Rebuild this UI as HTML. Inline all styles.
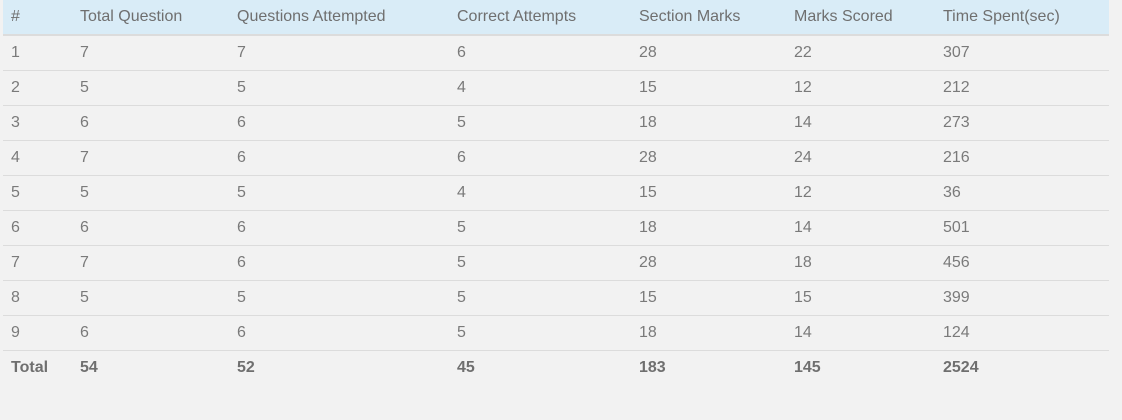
<html><head><style>
body{margin:0;background:#f2f2f2;font-family:"Liberation Sans",sans-serif;font-size:12px;color:#7a7a7a;}
table{position:absolute;left:3px;top:0;width:1106px;border-collapse:collapse;}
td,th{padding:0 0 0 8px;height:35px;text-align:left;border-bottom:1px solid #dcdcdc;}
th{background:#d9ecf7;font-weight:normal;color:#6f6f6f;height:35px;border-bottom:2px solid #dcdcdc;}
tr.t td{border-bottom:none;color:#6f6f6f;font-weight:bold;height:35px}
</style></head><body>
<table>
<colgroup><col style="width:69px"><col style="width:157px"><col style="width:220px"><col style="width:182px"><col style="width:155px"><col style="width:149px"><col></colgroup>
<tr><th>#</th><th>Total Question</th><th>Questions Attempted</th><th>Correct Attempts</th><th>Section Marks</th><th>Marks Scored</th><th>Time Spent(sec)</th></tr>
<tr><td>1</td><td>7</td><td>7</td><td>6</td><td>28</td><td>22</td><td>307</td></tr>
<tr><td>2</td><td>5</td><td>5</td><td>4</td><td>15</td><td>12</td><td>212</td></tr>
<tr><td>3</td><td>6</td><td>6</td><td>5</td><td>18</td><td>14</td><td>273</td></tr>
<tr><td>4</td><td>7</td><td>6</td><td>6</td><td>28</td><td>24</td><td>216</td></tr>
<tr><td>5</td><td>5</td><td>5</td><td>4</td><td>15</td><td>12</td><td>36</td></tr>
<tr><td>6</td><td>6</td><td>6</td><td>5</td><td>18</td><td>14</td><td>501</td></tr>
<tr><td>7</td><td>7</td><td>6</td><td>5</td><td>28</td><td>18</td><td>456</td></tr>
<tr><td>8</td><td>5</td><td>5</td><td>5</td><td>15</td><td>15</td><td>399</td></tr>
<tr><td>9</td><td>6</td><td>6</td><td>5</td><td>18</td><td>14</td><td>124</td></tr>
<tr class="t"><td>Total</td><td>54</td><td>52</td><td>45</td><td>183</td><td>145</td><td>2524</td></tr>
</table>
</body></html>
